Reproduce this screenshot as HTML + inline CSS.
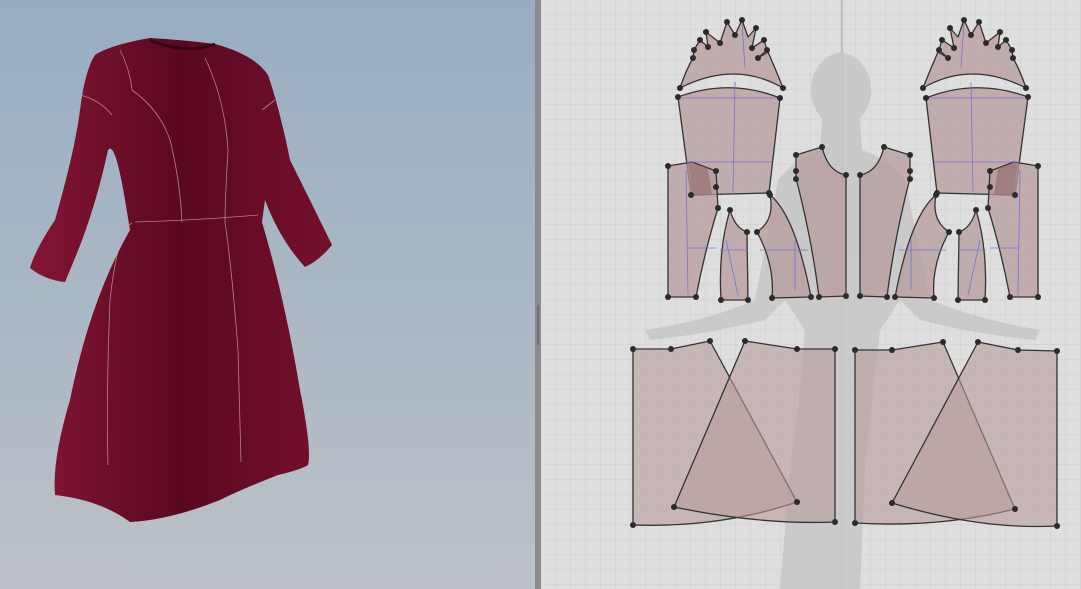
<!DOCTYPE html>
<html><head><meta charset="utf-8"><style>
html,body{margin:0;padding:0;width:1081px;height:589px;overflow:hidden;font-family:"Liberation Sans",sans-serif}
</style></head><body>
<svg width="1081" height="589" viewBox="0 0 1081 589" xmlns="http://www.w3.org/2000/svg">
<defs>
<linearGradient id="bg" x1="0" y1="0" x2="0" y2="1">
<stop offset="0" stop-color="#98adc2"/><stop offset="1" stop-color="#bcc1c7"/></linearGradient>
<linearGradient id="dr" x1="0" y1="0" x2="1" y2="0">
<stop offset="0" stop-color="#841634"/><stop offset="0.5" stop-color="#5a0820"/><stop offset="1" stop-color="#76102c"/></linearGradient>
<pattern id="grid" width="15" height="15" patternUnits="userSpaceOnUse" x="541" y="0">
<path d="M15 0V15M0 15H15" fill="none" stroke="#cfcfcf" stroke-width="1"/></pattern>
</defs>
<rect width="536" height="589" fill="url(#bg)"/>
<g fill="url(#dr)">
<path d="M95 55 Q110 45 150 38 Q185 40 215 44 Q255 55 268 75 Q280 110 290 160 Q310 200 332 245 Q320 260 305 267 Q280 240 265 200 L262 222 Q285 300 300 390 Q312 450 308 465 Q300 470 278 475 Q240 490 220 500 Q170 520 130 522 Q100 500 55 495 Q52 460 70 400 Q90 300 130 230 L125 200 Q115 140 108 150 Q95 210 75 258 Q70 270 65 282 Q45 280 30 268 Q35 250 55 220 Q75 150 80 110 Q85 70 95 55Z"/>
</g>
<path d="M150 40 Q185 55 215 44" fill="none" stroke="#3a0310" stroke-width="3"/>
<g fill="none" stroke="#c9a0a8" stroke-width="0.8" opacity="0.8">
<path d="M120 50 Q130 70 132 90 Q160 110 170 140 Q180 180 182 222"/>
<path d="M205 58 Q225 100 228 150 Q225 200 225 222"/>
<path d="M135 222 Q200 220 258 215"/>
<path d="M132 223 Q118 230 110 300 Q106 400 108 465"/>
<path d="M225 222 Q232 270 238 350 Q240 420 241 462"/>
<path d="M80 95 Q100 100 112 115"/><path d="M262 110 L275 100"/>
</g>
<rect x="535" y="0" width="6" height="589" fill="#8b8b8b"/>
<rect x="537" y="305" width="2" height="40" fill="#5a5a5a" opacity="0.5"/>
<rect x="541" y="0" width="540" height="589" fill="#dedede"/>
<rect x="541" y="0" width="540" height="589" fill="url(#grid)"/>
<line x1="842" y1="0" x2="842" y2="589" stroke="#b5b5b5" stroke-width="1.5"/>
<g fill="#c4c4c4" opacity="0.8">
<ellipse cx="841" cy="90" rx="30" ry="37"/>
<path d="M822 120 L860 120 L862 150 Q890 160 905 180 L930 300 Q980 320 1040 330 L1035 340 Q980 335 920 320 L900 300 L880 330 Q870 420 865 470 L860 589 L780 589 L790 470 Q800 400 805 330 L785 300 L765 320 Q700 335 650 340 L645 330 Q710 320 755 300 L778 180 Q795 158 820 150Z"/>
</g>
<g id="half" stroke="#333" stroke-width="1.3" stroke-linejoin="round">
<g fill="#b69b9b" fill-opacity="0.75">
<path d="M680 88 Q686 70 693 58 L694 50 L700 40 L708 47 L706 32 L720 43 L727 22 L735 35 L742 20 L748 37 L756 28 L752 48 L764 40 L767 50 L758 58 L768 52 Q778 75 783 88 Q735 60 680 88Z"/>
<path d="M678 97 Q730 78 780 98 L769 193 L691 195Z"/>
<path d="M668 166 L692 162 L716 171 L718 208 Q705 250 696 297 L668 297Z"/>
<path d="M730 210 Q735 228 747 232 L748 300 L721 300 Q718 250 730 210Z"/>
<path d="M770 195 Q795 215 811 297 L772 298 Q775 265 757 232 Q775 220 770 195Z"/>
<path d="M796 155 L822 147 Q828 172 846 175 L846 296 L819 297 Q812 240 796 178Z"/>
</g>
<path d="M688 162 L708 168 L712 195 L692 196Z" fill="#8f6a6e" fill-opacity="0.6" stroke="none"/>
<g fill="none" stroke="#7a74d0" stroke-width="0.8">
<line x1="735" y1="82" x2="733" y2="192"/><line x1="682" y1="98" x2="778" y2="98"/>
<line x1="686" y1="162" x2="772" y2="162"/><line x1="687" y1="248" x2="716" y2="248"/>
<line x1="686" y1="170" x2="688" y2="295"/><line x1="795" y1="240" x2="795" y2="290"/>
<line x1="760" y1="250" x2="808" y2="250"/><line x1="726" y1="240" x2="738" y2="295"/>
<line x1="742" y1="22" x2="745" y2="68"/><line x1="720" y1="250" x2="748" y2="250"/>
</g>
<g fill="#2b2b2b" stroke="none">
<circle cx="680" cy="88" r="3"/><circle cx="783" cy="88" r="3"/><circle cx="693" cy="58" r="3"/><circle cx="694" cy="50" r="3"/>
<circle cx="700" cy="40" r="3"/><circle cx="708" cy="47" r="3"/><circle cx="706" cy="32" r="3"/><circle cx="720" cy="43" r="3"/>
<circle cx="727" cy="22" r="3"/><circle cx="735" cy="35" r="3"/><circle cx="742" cy="20" r="3"/><circle cx="756" cy="28" r="3"/>
<circle cx="764" cy="40" r="3"/><circle cx="767" cy="50" r="3"/><circle cx="758" cy="58" r="3"/><circle cx="752" cy="48" r="3"/>
<circle cx="678" cy="97" r="3"/><circle cx="780" cy="98" r="3"/><circle cx="691" cy="195" r="3"/><circle cx="769" cy="193" r="3"/>
<circle cx="668" cy="166" r="3"/><circle cx="716" cy="171" r="3"/><circle cx="716" cy="187" r="3"/><circle cx="718" cy="208" r="3"/>
<circle cx="668" cy="297" r="3"/><circle cx="696" cy="297" r="3"/><circle cx="730" cy="210" r="3"/><circle cx="747" cy="232" r="3"/>
<circle cx="748" cy="300" r="3"/><circle cx="721" cy="300" r="3"/><circle cx="757" cy="232" r="3"/><circle cx="770" cy="195" r="3"/>
<circle cx="772" cy="298" r="3"/><circle cx="811" cy="297" r="3"/><circle cx="796" cy="155" r="3"/><circle cx="822" cy="147" r="3"/>
<circle cx="846" cy="175" r="3"/><circle cx="846" cy="296" r="3"/><circle cx="819" cy="297" r="3"/><circle cx="796" cy="171" r="3"/><circle cx="796" cy="179" r="3"/>
</g>
</g>
<use href="#half" transform="translate(1706,0) scale(-1,1)"/>
<g stroke="#333" stroke-width="1.3" fill="#b69b9b" fill-opacity="0.6" stroke-linejoin="round">
<path d="M633 349 L671 349 L710 341 L797 502 Q720 528 633 525Z"/>
<path d="M745 341 L674 507 Q760 525 835 522 L835 349 L797 349Z"/>
<path d="M855 350 L892 350 L943 342 L1015 509 Q940 528 855 523Z"/>
<path d="M978 342 L892 503 Q980 530 1057 526 L1057 351 L1018 350Z"/>
</g>
<g fill="#2b2b2b">
<circle cx="633" cy="349" r="3"/><circle cx="671" cy="349" r="3"/><circle cx="710" cy="341" r="3"/><circle cx="797" cy="502" r="3"/>
<circle cx="633" cy="525" r="3"/><circle cx="745" cy="341" r="3"/><circle cx="674" cy="507" r="3"/><circle cx="835" cy="522" r="3"/>
<circle cx="835" cy="349" r="3"/><circle cx="797" cy="349" r="3"/>
<circle cx="855" cy="350" r="3"/><circle cx="892" cy="350" r="3"/><circle cx="943" cy="342" r="3"/><circle cx="1015" cy="509" r="3"/>
<circle cx="855" cy="523" r="3"/><circle cx="978" cy="342" r="3"/><circle cx="892" cy="503" r="3"/><circle cx="1057" cy="526" r="3"/>
<circle cx="1057" cy="351" r="3"/><circle cx="1018" cy="350" r="3"/>
</g>
</svg>
</body></html>
